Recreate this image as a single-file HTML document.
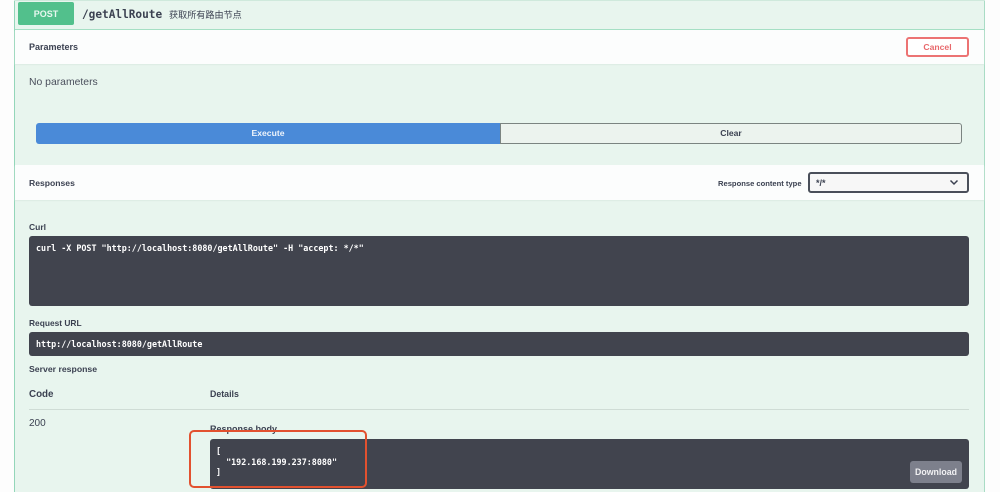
<!DOCTYPE html>
<html><head><meta charset="utf-8">
<style>
html,body{margin:0;padding:0;width:1000px;height:492px;overflow:hidden;background:#fdfdfd}
body{position:relative;font-family:"Liberation Sans","Noto Sans CJK SC",sans-serif;color:#3b4151}
#w{position:absolute;left:0;top:0;width:1000px;height:492px;filter:blur(.3px)}
.a{position:absolute;box-sizing:border-box;white-space:nowrap}
.t{font-size:8.8px;font-weight:700;line-height:12px;color:#3b4151}
.m{font-family:"DejaVu Sans Mono","Liberation Mono",monospace;font-weight:700;font-size:8.38px;line-height:12px;color:#fff}
.dark{background:#41444e;border-radius:3px}
</style></head><body><div id="w">
<div class="a" style="left:14px;top:0;width:971px;height:492px;background:#e8f5ee;border-left:1.5px solid #93d6b9;border-right:1.5px solid #a9dcc5"></div>
<div class="a" style="left:14px;top:0;width:971px;height:1px;background:#cfe9dc"></div>
<div class="a" style="left:15px;top:29px;width:969px;height:1.5px;background:#a5dfc4"></div>

<div class="a" style="left:18px;top:2px;width:56px;height:23px;background:#52c08c;border-radius:2px;color:#e8f7ef;font-size:9px;font-weight:700;line-height:24px;text-align:center">POST</div>
<div class="a" style="left:82px;top:6.5px;font-family:'DejaVu Sans Mono','Liberation Mono',monospace;font-weight:700;font-size:11.1px;line-height:16px;color:#3b4151">/getAllRoute</div>
<div class="a" style="left:169px;top:8px;font-family:'Noto Sans CJK SC',sans-serif;font-size:9.1px;line-height:13px;color:#3b4151">获取所有路由节点</div>

<div class="a" style="left:15px;top:30px;width:969px;height:34px;background:#fcfdfd;box-shadow:0 1px 1px #dcebe3"></div>
<div class="a t" style="left:29px;top:41px;font-size:9px">Parameters</div>
<div class="a" style="left:906px;top:37px;width:63px;height:20px;border:2px solid #ec7373;border-radius:3px;background:#fff;color:#e8696c;font-size:8.6px;font-weight:700;line-height:17px;text-align:center">Cancel</div>
<div class="a" style="left:29px;top:75.5px;font-size:10.4px;line-height:13px;color:#4a4f5c">No parameters</div>

<div class="a" style="left:36px;top:123px;width:464px;height:21px;background:#4a8ad8;border-radius:3px 0 0 3px;color:#eef4fb;font-size:8.6px;font-weight:700;line-height:21px;text-align:center">Execute</div>
<div class="a" style="left:500px;top:123px;width:462px;height:21px;background:#ecf3ee;border:1.5px solid #7b8481;border-radius:0 3px 3px 0;color:#3b4151;font-size:8.6px;font-weight:700;line-height:18px;text-align:center">Clear</div>

<div class="a" style="left:15px;top:165px;width:969px;height:35px;background:#fcfdfd;box-shadow:0 1px 1px #dcebe3"></div>
<div class="a t" style="left:29px;top:177px;font-size:8.6px">Responses</div>
<div class="a" style="left:718px;top:177.5px;font-size:7.6px;font-weight:700;line-height:12px;color:#3b4151">Response content type</div>
<div class="a" style="left:808px;top:172px;width:161px;height:21px;background:#f7f7f7;border:2px solid #4a4f5a;border-radius:3px"></div>
<div class="a" style="left:816px;top:176.5px;font-size:9px;font-weight:700;line-height:12px;color:#3b4151">*/*</div>
<svg class="a" style="left:948px;top:178px" width="12" height="9" viewBox="0 0 12 9"><path d="M2.5 2.5 L6 6 L9.5 2.5" fill="none" stroke="#3b4151" stroke-width="1.5"/></svg>

<div class="a t" style="left:29px;top:221px;font-size:8.5px">Curl</div>
<div class="a dark" style="left:29px;top:236px;width:940px;height:70px"></div>
<div class="a m" style="left:36px;top:242px">curl -X POST "http://localhost:8080/getAllRoute" -H "accept: */*"</div>

<div class="a t" style="left:29px;top:317px;font-size:8.4px">Request URL</div>
<div class="a dark" style="left:29px;top:332px;width:940px;height:24px"></div>
<div class="a m" style="left:36px;top:338px">http://localhost:8080/getAllRoute</div>

<div class="a t" style="left:29px;top:363px;font-size:8.7px">Server response</div>
<div class="a" style="left:29px;top:388px;font-size:9.8px;font-weight:700;line-height:14px;color:#3b4151">Code</div>
<div class="a t" style="left:210px;top:388px;font-size:8.8px">Details</div>
<div class="a" style="left:29px;top:409px;width:940px;height:1px;background:#cfdcd5"></div>
<div class="a" style="left:29px;top:417px;font-size:10px;line-height:13px;color:#3b4151">200</div>
<div class="a t" style="left:210px;top:423px;font-size:9px">Response body</div>

<div class="a dark" style="left:210px;top:439px;width:759px;height:50px"></div>
<div class="a m" style="left:216px;top:446px;line-height:10.5px;white-space:pre">[
  "192.168.199.237:8080"
]</div>
<div class="a" style="left:910px;top:461px;width:52px;height:22px;background:#7d808c;border-radius:3px;color:#f1f1f3;font-size:8.8px;font-weight:700;line-height:23px;text-align:center">Download</div>

<div class="a" style="left:189px;top:430px;width:178px;height:58px;border:2px solid #e2512f;border-radius:5px"></div>
</div></body></html>
